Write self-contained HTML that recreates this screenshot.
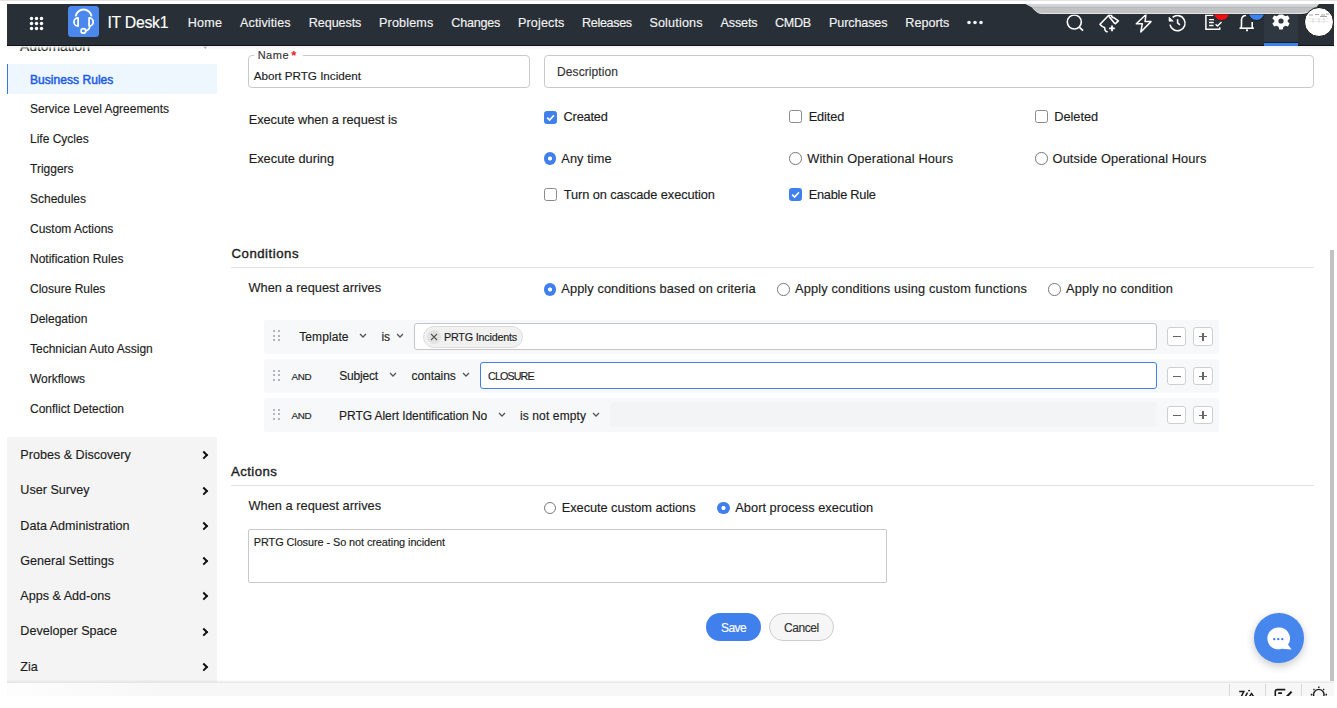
<!DOCTYPE html>
<html><head><meta charset="utf-8">
<style>
html,body{margin:0;padding:0;width:1337px;height:708px;overflow:hidden;background:#fff;}
body{position:relative;font-family:"Liberation Sans",sans-serif;}
.t{position:absolute;white-space:pre;line-height:1;-webkit-text-stroke:0.15px currentColor;}
.a{position:absolute;box-sizing:border-box;}
.cb{position:absolute;box-sizing:border-box;width:13px;height:13px;border:1px solid #8a8a8a;border-radius:2.5px;background:#fff;}
.cb.on{background:#3f80ec;border-color:#3f80ec;}
.rd{position:absolute;box-sizing:border-box;width:12.5px;height:12.5px;border:1px solid #7a7a7a;border-radius:50%;background:#fff;}
.rd.on{border:none;background:radial-gradient(circle at 50% 50%,#fff 0,#fff 1.7px,#3f80ec 2.4px);}
.row{position:absolute;left:263.5px;width:955.5px;height:34px;background:#f6f8fa;border-radius:3px;}
.dots{position:absolute;left:272.5px;width:8px;height:11px;}
.dots i{position:absolute;width:2px;height:2px;border-radius:1px;background:#9aa1a8;}
.chev{position:absolute;width:5px;height:5px;border-right:1.3px solid #555;border-bottom:1.3px solid #555;transform:rotate(45deg);}
.sbtn{position:absolute;box-sizing:border-box;width:19.5px;height:18.5px;border:1px solid #cfcfcf;border-radius:3px;background:#fff;}
.sbtn .h{position:absolute;left:5px;top:8px;width:8px;height:1.3px;background:#666;}
.sbtn .v{position:absolute;left:8.4px;top:4.7px;width:1.3px;height:8px;background:#666;}
.rchev{position:absolute;width:4.1px;height:4.1px;border-right:2.1px solid #111;border-bottom:2.1px solid #111;transform:rotate(-45deg);}
</style></head>
<body>
<!-- top strip -->
<div class="a" style="left:0;top:0;width:1337px;height:1px;background:#e4e4e4"></div>

<!-- sidebar highlight -->
<div class="a" style="left:7px;top:64px;width:210px;height:29.7px;background:#eff7fe"></div>
<div class="a" style="left:7px;top:64px;width:1.2px;height:29.7px;background:#3a78e6"></div>
<div class="chev" style="left:202.3px;top:40.3px;width:5.5px;height:5.5px;border-right:1.6px solid #222;border-bottom:1.6px solid #222"></div>

<!-- lower sidebar -->
<div class="a" style="left:7px;top:437px;width:210.3px;height:246px;background:#f4f4f4"></div>
<div class="a" style="left:217px;top:679.5px;width:1117px;height:3.5px;background:linear-gradient(rgba(235,235,235,0),#e4e4e4)"></div>
<div class="a" style="left:7px;top:680px;width:210px;height:3px;background:linear-gradient(#f0f0f0,#e4e4e4)"></div>
<div class="a" style="left:7px;top:683px;width:1327px;height:12.6px;background:linear-gradient(90deg,#fdfdfd,#f7f7f7 12%,#f7f7f7)"></div>
<div class="a" style="left:1229px;top:684px;width:1px;height:11.5px;background:#d8d8d8"></div>
<div class="a" style="left:1265px;top:684px;width:1px;height:11.5px;background:#d8d8d8"></div>
<div class="a" style="left:1301px;top:684px;width:1px;height:11.5px;background:#d8d8d8"></div>
<div class="rchev" style="left:200.6px;top:452.2px"></div>
<div class="rchev" style="left:200.6px;top:487.5px"></div>
<div class="rchev" style="left:200.6px;top:522.8px"></div>
<div class="rchev" style="left:200.6px;top:558.1px"></div>
<div class="rchev" style="left:200.6px;top:593.3px"></div>
<div class="rchev" style="left:200.6px;top:628.6px"></div>
<div class="rchev" style="left:200.6px;top:663.9px"></div>
<!-- bottom bar partial icons -->
<div class="a" style="left:1200px;top:686px;width:134px;height:9.6px;overflow:hidden">
<svg class="a" style="left:36px;top:0" width="22" height="12" viewBox="0 0 22 12"><path d="M3.2 5.5 H7.8 L5.3 10.5 M11.5 6.6 L9.4 10.5 M13.5 10.5 L15.5 7.6 L17.5 10.5" stroke="#1a1a1a" stroke-width="1.5" fill="none"/><circle cx="13.1" cy="4.6" r="0.95" fill="#1a1a1a"/></svg>
<svg class="a" style="left:73px;top:2px" width="22" height="10" viewBox="0 0 22 10"><path d="M2.3 9 V3.6 Q2.3 1.6 4.3 1.6 H12.3 M5.2 5.1 H9" stroke="#1a1a1a" stroke-width="1.6" fill="none"/><path d="M13 9.5 L18.6 3.6" stroke="#1a1a1a" stroke-width="2.1"/></svg>
<svg class="a" style="left:109px;top:0" width="20" height="12" viewBox="0 0 20 12"><path d="M5.2 11 A5.2 5.2 0 1 1 14.4 11 M9.8 0.6 V1.9 M4.5 3.1 L5.4 4 M15.1 3.1 L14.2 4" stroke="#1a1a1a" stroke-width="1.4" fill="none"/><path d="M1.8 8.6 H3.3 M16.5 8.6 H18" stroke="#1a1a1a" stroke-width="1.6"/></svg>
</div>
<!-- form top -->
<div class="a" style="left:248.4px;top:55.2px;width:281.6px;height:33.2px;border:1px solid #c9c9c9;border-radius:4px"></div>
<div class="a" style="left:254px;top:52px;width:49px;height:6px;background:#fff"></div>
<div class="t" style="left:291.3px;top:48.5px;font-size:13px;color:#e8231e;font-weight:700;-webkit-text-stroke:0">*</div>
<div class="a" style="left:543.8px;top:55.2px;width:770px;height:33.2px;border:1px solid #c9c9c9;border-radius:4px"></div>

<div class="cb on" style="left:543.8px;top:110.6px"><svg width="11" height="11" viewBox="0 0 11 11" style="position:absolute;left:0;top:0"><path d="M2.2 5.6 L4.6 8 L9 3.2" stroke="#fff" stroke-width="1.7" fill="none"/></svg></div>
<div class="cb" style="left:789px;top:110.3px"></div>
<div class="cb" style="left:1034.8px;top:110.3px"></div>
<div class="rd on" style="left:543.8px;top:152px"></div>
<div class="rd" style="left:789.2px;top:152.2px"></div>
<div class="rd" style="left:1035px;top:152.2px"></div>
<div class="cb" style="left:543.8px;top:188.3px"></div>
<div class="cb on" style="left:789px;top:188.1px"><svg width="11" height="11" viewBox="0 0 11 11" style="position:absolute;left:0;top:0"><path d="M2.2 5.6 L4.6 8 L9 3.2" stroke="#fff" stroke-width="1.7" fill="none"/></svg></div>

<!-- conditions -->
<div class="a" style="left:230.7px;top:267.3px;width:1083.5px;height:1.2px;background:#e3e3e3"></div>
<div class="rd on" style="left:543.8px;top:283px"></div>
<div class="rd" style="left:777.2px;top:283px"></div>
<div class="rd" style="left:1048.2px;top:283px"></div>

<div class="row" style="top:319.7px"></div>
<div class="row" style="top:359.4px"></div>
<div class="row" style="top:398.4px"></div>
<div class="dots" style="top:330px"><i style="left:0;top:0"></i><i style="left:5.6px;top:0"></i><i style="left:0;top:4.7px"></i><i style="left:5.6px;top:4.7px"></i><i style="left:0;top:9.4px"></i><i style="left:5.6px;top:9.4px"></i></div>
<div class="dots" style="top:369.7px"><i style="left:0;top:0"></i><i style="left:5.6px;top:0"></i><i style="left:0;top:4.7px"></i><i style="left:5.6px;top:4.7px"></i><i style="left:0;top:9.4px"></i><i style="left:5.6px;top:9.4px"></i></div>
<div class="dots" style="top:408.7px"><i style="left:0;top:0"></i><i style="left:5.6px;top:0"></i><i style="left:0;top:4.7px"></i><i style="left:5.6px;top:4.7px"></i><i style="left:0;top:9.4px"></i><i style="left:5.6px;top:9.4px"></i></div>

<svg class="a" style="left:358.8px;top:333.1px" width="8" height="5" viewBox="0 0 8 5"><path d="M1 1 L4 4 L7 1" stroke="#555" stroke-width="1.3" fill="none"/></svg>
<svg class="a" style="left:395.8px;top:333.1px" width="8" height="5" viewBox="0 0 8 5"><path d="M1 1 L4 4 L7 1" stroke="#555" stroke-width="1.3" fill="none"/></svg>
<div class="a" style="left:413.5px;top:323.2px;width:743.1px;height:26.8px;background:#fff;border:1px solid #c5c5c5;border-radius:3px"></div>
<div class="a" style="left:423.3px;top:326px;width:99.3px;height:21.7px;background:#f1f1f1;border:1px solid #dcdcdc;border-radius:11px"></div>
<div class="a" style="left:427px;top:329.5px;width:14px;height:14px;background:#e2e2e2;border-radius:7px"></div>
<svg class="a" style="left:430px;top:332.5px" width="8" height="8" viewBox="0 0 8 8"><path d="M1 1 L7 7 M7 1 L1 7" stroke="#555" stroke-width="1.1"/></svg>

<svg class="a" style="left:388.6px;top:372.3px" width="8" height="5" viewBox="0 0 8 5"><path d="M1 1 L4 4 L7 1" stroke="#555" stroke-width="1.3" fill="none"/></svg>
<svg class="a" style="left:461.6px;top:372.3px" width="8" height="5" viewBox="0 0 8 5"><path d="M1 1 L4 4 L7 1" stroke="#555" stroke-width="1.3" fill="none"/></svg>
<div class="a" style="left:480.3px;top:362.2px;width:676.3px;height:26.4px;background:#fff;border:1.3px solid #3f80ec;border-radius:3px"></div>

<svg class="a" style="left:497.7px;top:411.5px" width="8" height="5" viewBox="0 0 8 5"><path d="M1 1 L4 4 L7 1" stroke="#555" stroke-width="1.3" fill="none"/></svg>
<svg class="a" style="left:592.3px;top:411.5px" width="8" height="5" viewBox="0 0 8 5"><path d="M1 1 L4 4 L7 1" stroke="#555" stroke-width="1.3" fill="none"/></svg>
<div class="a" style="left:610px;top:401.8px;width:546.6px;height:25.7px;background:#f2f4f6;border-radius:3px"></div>

<div class="sbtn" style="left:1166.5px;top:327px"><div class="h"></div></div>
<div class="sbtn" style="left:1193px;top:327px"><div class="h"></div><div class="v"></div></div>
<div class="sbtn" style="left:1166.5px;top:366.5px"><div class="h"></div></div>
<div class="sbtn" style="left:1193px;top:366.5px"><div class="h"></div><div class="v"></div></div>
<div class="sbtn" style="left:1166.5px;top:405.5px"><div class="h"></div></div>
<div class="sbtn" style="left:1193px;top:405.5px"><div class="h"></div><div class="v"></div></div>

<!-- actions -->
<div class="a" style="left:230.7px;top:485.2px;width:1083.5px;height:1.2px;background:#e3e3e3"></div>
<div class="rd" style="left:543.8px;top:501.8px"></div>
<div class="rd on" style="left:717.3px;top:501.8px"></div>
<div class="a" style="left:248.4px;top:529.3px;width:639.1px;height:54px;border:1px solid #c9c9c9;border-radius:2px"></div>
<div class="a" style="left:706.3px;top:613.1px;width:54.5px;height:27.7px;background:#3f80ec;border-radius:14px"></div>
<div class="a" style="left:769px;top:613.1px;width:64.6px;height:27.7px;background:#f6f6f6;border:1px solid #cdcdcd;border-radius:14px"></div>

<!-- scrollbar -->
<div class="a" style="left:1330px;top:250px;width:4px;height:430.5px;background:#c2c2c2"></div>

<!-- chat fab -->
<div class="a" style="left:1254px;top:613px;width:49.5px;height:49.5px;background:#4787ed;border-radius:50%;box-shadow:0 3px 8px rgba(0,0,0,0.22)"></div>
<svg class="a" style="left:1266px;top:626px" width="27" height="25" viewBox="0 0 27 25"><path d="M12.3 1.5 A10.9 10.9 0 1 0 15.5 22.8 L25.6 23.6 L22 18.6 A10.9 10.9 0 0 0 12.3 1.5 Z" fill="#fff"/><circle cx="8.3" cy="13.2" r="1.15" fill="#3a78e6"/><circle cx="12.3" cy="13.2" r="1.15" fill="#3a78e6"/><circle cx="16.3" cy="13.2" r="1.15" fill="#3a78e6"/></svg>

<div id="hdr" style="position:absolute;left:0;top:0;width:1337px;height:46px;z-index:10">
<!-- header -->
<div class="a" style="left:7px;top:4px;width:1327px;height:41.5px;background:#282f37"></div>
<div class="a" style="left:7px;top:44.6px;width:1327px;height:1.1px;background:#0f1317"></div>
<div class="a" style="left:7px;top:45.7px;width:1327px;height:4px;background:linear-gradient(#f3f3f3,rgba(255,255,255,0))"></div>
<div class="a" style="left:1264px;top:4px;width:34px;height:41.5px;background:#2f3741"></div>
<div class="a" style="left:1264px;top:41.8px;width:34px;height:1px;background:#1a1f24"></div>
<div class="a" style="left:1264px;top:42.8px;width:34px;height:2.9px;background:#3a82f0"></div>
<!-- grid icon -->
<svg class="a" style="left:29px;top:16px" width="15" height="15" viewBox="0 0 15 15" fill="#fff">
<circle cx="2.5" cy="2.5" r="1.72"/><circle cx="7.5" cy="2.5" r="1.72"/><circle cx="12.5" cy="2.5" r="1.72"/>
<circle cx="2.5" cy="7.5" r="1.72"/><circle cx="7.5" cy="7.5" r="1.72"/><circle cx="12.5" cy="7.5" r="1.72"/>
<circle cx="2.5" cy="12.5" r="1.72"/><circle cx="7.5" cy="12.5" r="1.72"/><circle cx="12.5" cy="12.5" r="1.72"/></svg>
<!-- logo -->
<div class="a" style="left:68.3px;top:6.3px;width:31px;height:30.7px;background:#4a88ee;border-radius:3.5px"></div>
<svg class="a" style="left:68.3px;top:6.3px" width="31" height="31" viewBox="0 0 31 31">
<path d="M7.6 10.4 A8.1 8.1 0 0 1 23.6 10.4" stroke="#fff" stroke-width="1.9" fill="none"/>
<path d="M10.1 11.9 A4.1 4.1 0 0 0 10.1 20.1 Z" stroke="#fff" stroke-width="1.8" fill="none" stroke-linejoin="round"/>
<path d="M21.1 11.9 A4.1 4.1 0 0 1 21.1 20.1 Z" stroke="#fff" stroke-width="1.8" fill="none" stroke-linejoin="round"/>
<path d="M21.9 20.2 Q21.5 24 17.7 24.9" stroke="#fff" stroke-width="1.6" fill="none"/>
<circle cx="15.4" cy="24.9" r="2.3" stroke="#fff" stroke-width="1.7" fill="#4a88ee"/>
</svg>
<!-- more dots -->
<svg class="a" style="left:967px;top:20px" width="16" height="5" viewBox="0 0 16 5" fill="#f2f2f2"><circle cx="2" cy="2.5" r="1.8"/><circle cx="8" cy="2.5" r="1.8"/><circle cx="14" cy="2.5" r="1.8"/></svg>

<!-- right icons -->
<svg class="a" style="left:1064px;top:12px" width="22" height="22" viewBox="0 0 22 22"><circle cx="10.3" cy="10" r="7" stroke="#fff" stroke-width="1.6" fill="none"/><path d="M15.3 15.2 L19 18.7" stroke="#fff" stroke-width="1.8"/></svg>
<svg class="a" style="left:1096px;top:10px" width="28" height="26" viewBox="0 0 28 26" fill="none" stroke="#fff" stroke-width="1.6" stroke-linejoin="round">
<path d="M6.8 17 L4 14.3 L13 5 L15.6 5.4 Q15.6 7.6 17.8 7.6 L22.4 10.8 L18.8 14.2"/>
<path d="M12.8 6.3 L18.9 13.7"/>
<path d="M6.8 17 Q8.8 16.9 8.9 18.9 Q8.7 20.4 9.9 21.2 L11.6 22"/>
<path d="M13.2 18.4 H18.8 M16 15.6 V21.2" stroke-width="1.8"/>
</svg>
<svg class="a" style="left:1134px;top:12px" width="20" height="22" viewBox="0 0 20 22"><path d="M12 2.5 L2.3 11.8 H8.3 L6.8 20 L17 9.6 H11 Z" stroke="#fff" stroke-width="1.5" fill="none" stroke-linejoin="round"/></svg>
<svg class="a" style="left:1163px;top:10px" width="30" height="26" viewBox="0 0 30 26"><path d="M7.0 14.6 A7.6 7.6 0 1 0 9.6 7.3" stroke="#fff" stroke-width="1.6" fill="none"/><path d="M6.0 7.0 L6.0 11.2 L10.3 11.2 Z" fill="#fff" stroke="#fff" stroke-width="0.6" stroke-linejoin="round"/><path d="M14.6 9.3 V12.9 L16.9 14.8" stroke="#fff" stroke-width="1.6" fill="none"/></svg>
<svg class="a" style="left:1204px;top:14px" width="20" height="18" viewBox="0 0 20 18"><path d="M9.5 1.3 H1.9 V15.3 H15.7 V13.2" stroke="#fff" stroke-width="1.5" fill="none"/><path d="M5.1 5.6 H10 M5.1 8.5 H9.7 M5.1 11.5 H9.5" stroke="#fff" stroke-width="1.4"/><path d="M11.6 10.3 L13.5 12 L17.5 8" stroke="#fff" stroke-width="1.4" fill="none"/></svg>
<div class="a" style="left:1200px;top:4px;width:70px;height:30px;overflow:hidden"><div class="a" style="left:12.7px;top:-0.6px;width:17.6px;height:17.6px;background:#f40d0d;border-radius:50%;border:0.9px solid #1b2f35"></div></div>
<svg class="a" style="left:1236px;top:12px" width="20" height="21" viewBox="0 0 20 21"><path d="M3.5 16.2 H17.9" stroke="#fff" stroke-width="1.6"/><path d="M5.2 16 Q5.5 14 5.5 12 V8 Q5.8 3.5 10 3.5 M16.2 16 V10" stroke="#fff" stroke-width="1.6" fill="none"/><path d="M10.1 18.2 H11.9" stroke="#fff" stroke-width="2"/></svg>
<div class="a" style="left:1240px;top:4px;width:40px;height:30px;overflow:hidden"><div class="a" style="left:7.5px;top:-0.2px;width:17.4px;height:17.4px;background:#3f84ee;border-radius:50%;border:0.9px solid #1a1c1e"></div></div>
<svg class="a" style="left:1271px;top:11px" width="20" height="20" viewBox="0 0 20 20"><path fill="#fff" fill-rule="evenodd" d="M8.3 1.5 H11.7 L12.3 4 L14.4 5.2 L16.9 4.4 L18.6 7.4 L16.7 9.2 V10.8 L18.6 12.6 L16.9 15.6 L14.4 14.8 L12.3 16 L11.7 18.5 H8.3 L7.7 16 L5.6 14.8 L3.1 15.6 L1.4 12.6 L3.3 10.8 V9.2 L1.4 7.4 L3.1 4.4 L5.6 5.2 L7.7 4 Z M10 7.4 A2.6 2.6 0 1 0 10 12.6 A2.6 2.6 0 1 0 10 7.4 Z"/></svg>
<!-- overlay notch -->
<svg class="a" style="left:1020px;top:4px" width="310" height="12" viewBox="0 0 310 12">
<path d="M5.7 0 L12 3.4 Q14.5 5.8 16.5 7.6 Q18.8 10.3 21.8 10.6 L281 10.6 Q288 10.6 292 6.5 Q295.5 2 299 0 Z" fill="#0c0f12"/>
<path d="M5.7 0 L12 3.4 Q14.5 5.8 16.5 7.6 Q18.8 9.6 21.5 9.8 L281 9.8 Q288 9.8 292 6 Q295.5 2 299 0 Z" fill="#c1c2c3"/>
<path d="M5.7 0 L12 3.2 L296.4 3.2 Q297.7 1.4 299 0 Z" fill="#d3d4d5"/>
<path d="M12 3.3 H296.3" stroke="#a8a8a8" stroke-width="0.6"/>
<path d="M12.5 3.9 Q14.5 5.8 16.5 7.6 Q18.8 9.6 21.5 9.6 L281 9.6 Q288 9.6 292 5.8" stroke="#f4f4f4" stroke-width="0.9" fill="none"/>
</svg>
<div class="a" style="left:1303.5px;top:7px;width:30.3px;height:30.3px;background:#fff;border-radius:50%;border:1.2px solid #111"></div>
<svg class="a" style="left:1307px;top:12px" width="24" height="12" viewBox="0 0 24 12"><path d="M2 3 H6 M8 2.5 H12 M14 3 H18 M19 2 H22 M13 4.5 H20" stroke="#9a9a9a" stroke-width="0.9"/><path d="M2 7 H22 M2 9.5 H22" stroke="#ececec" stroke-width="1"/><path d="M6 6 V11 M12 6 V11 M17 6 V11" stroke="#c8c8c8" stroke-width="0.6"/></svg>



</div>
<div class="t" style="left:107.5px;top:15.33px;font-size:15.80px;font-weight:400;color:#ffffff;letter-spacing:-0.278px;z-index:20;">IT Desk1</div>
<div class="t" style="left:187.8px;top:17.44px;font-size:12.60px;font-weight:400;color:#f2f2f2;letter-spacing:0.227px;z-index:20;">Home</div>
<div class="t" style="left:240.0px;top:17.44px;font-size:12.60px;font-weight:400;color:#f2f2f2;letter-spacing:0.101px;z-index:20;">Activities</div>
<div class="t" style="left:308.8px;top:17.44px;font-size:12.60px;font-weight:400;color:#f2f2f2;letter-spacing:-0.090px;z-index:20;">Requests</div>
<div class="t" style="left:379.0px;top:17.44px;font-size:12.60px;font-weight:400;color:#f2f2f2;letter-spacing:0.150px;z-index:20;">Problems</div>
<div class="t" style="left:451.3px;top:17.44px;font-size:12.60px;font-weight:400;color:#f2f2f2;letter-spacing:-0.217px;z-index:20;">Changes</div>
<div class="t" style="left:518.0px;top:17.44px;font-size:12.60px;font-weight:400;color:#f2f2f2;letter-spacing:0.125px;z-index:20;">Projects</div>
<div class="t" style="left:582.0px;top:17.44px;font-size:12.60px;font-weight:400;color:#f2f2f2;letter-spacing:-0.339px;z-index:20;">Releases</div>
<div class="t" style="left:649.4px;top:17.44px;font-size:12.60px;font-weight:400;color:#f2f2f2;letter-spacing:0.165px;z-index:20;">Solutions</div>
<div class="t" style="left:720.6px;top:17.44px;font-size:12.60px;font-weight:400;color:#f2f2f2;letter-spacing:-0.166px;z-index:20;">Assets</div>
<div class="t" style="left:775.0px;top:17.44px;font-size:12.60px;font-weight:400;color:#f2f2f2;letter-spacing:-0.348px;z-index:20;">CMDB</div>
<div class="t" style="left:829.0px;top:17.44px;font-size:12.60px;font-weight:400;color:#f2f2f2;letter-spacing:-0.124px;z-index:20;">Purchases</div>
<div class="t" style="left:905.3px;top:17.44px;font-size:12.60px;font-weight:400;color:#f2f2f2;letter-spacing:-0.001px;z-index:20;">Reports</div>
<div class="t" style="left:20.0px;top:39.45px;font-size:14.00px;font-weight:400;color:#1d1d1d;letter-spacing:-0.083px;">Automation</div>
<div class="t" style="left:30.0px;top:73.54px;font-size:12.00px;font-weight:400;color:#1c5de6;letter-spacing:0.049px;-webkit-text-stroke:0.5px currentColor;">Business Rules</div>
<div class="t" style="left:30.0px;top:103.14px;font-size:12.00px;font-weight:400;color:#1d1d1d;letter-spacing:-0.017px;">Service Level Agreements</div>
<div class="t" style="left:30.0px;top:133.14px;font-size:12.00px;font-weight:400;color:#1d1d1d;">Life Cycles</div>
<div class="t" style="left:30.0px;top:163.14px;font-size:12.00px;font-weight:400;color:#1d1d1d;">Triggers</div>
<div class="t" style="left:30.0px;top:193.14px;font-size:12.00px;font-weight:400;color:#1d1d1d;">Schedules</div>
<div class="t" style="left:30.0px;top:223.14px;font-size:12.00px;font-weight:400;color:#1d1d1d;">Custom Actions</div>
<div class="t" style="left:30.0px;top:253.14px;font-size:12.00px;font-weight:400;color:#1d1d1d;">Notification Rules</div>
<div class="t" style="left:30.0px;top:283.14px;font-size:12.00px;font-weight:400;color:#1d1d1d;">Closure Rules</div>
<div class="t" style="left:30.0px;top:313.14px;font-size:12.00px;font-weight:400;color:#1d1d1d;">Delegation</div>
<div class="t" style="left:30.0px;top:343.14px;font-size:12.00px;font-weight:400;color:#1d1d1d;">Technician Auto Assign</div>
<div class="t" style="left:30.0px;top:373.14px;font-size:12.00px;font-weight:400;color:#1d1d1d;">Workflows</div>
<div class="t" style="left:30.0px;top:403.14px;font-size:12.00px;font-weight:400;color:#1d1d1d;">Conflict Detection</div>
<div class="t" style="left:20.3px;top:449.24px;font-size:12.60px;font-weight:400;color:#1d1d1d;letter-spacing:-0.005px;">Probes &amp; Discovery</div>
<div class="t" style="left:20.3px;top:484.49px;font-size:12.60px;font-weight:400;color:#1d1d1d;">User Survey</div>
<div class="t" style="left:20.3px;top:519.74px;font-size:12.60px;font-weight:400;color:#1d1d1d;">Data Administration</div>
<div class="t" style="left:20.3px;top:554.99px;font-size:12.60px;font-weight:400;color:#1d1d1d;">General Settings</div>
<div class="t" style="left:20.3px;top:590.24px;font-size:12.60px;font-weight:400;color:#1d1d1d;">Apps &amp; Add-ons</div>
<div class="t" style="left:20.3px;top:625.49px;font-size:12.60px;font-weight:400;color:#1d1d1d;">Developer Space</div>
<div class="t" style="left:20.3px;top:660.74px;font-size:12.60px;font-weight:400;color:#1d1d1d;">Zia</div>
<div class="t" style="left:257.7px;top:50.49px;font-size:11.00px;font-weight:400;color:#333;letter-spacing:0.489px;">Name</div>
<div class="t" style="left:253.7px;top:69.60px;font-size:11.70px;font-weight:400;color:#1d1d1d;letter-spacing:-0.022px;">Abort PRTG Incident</div>
<div class="t" style="left:557.1px;top:66.34px;font-size:12.00px;font-weight:400;color:#333;letter-spacing:0.079px;">Description</div>
<div class="t" style="left:248.7px;top:114.07px;font-size:12.80px;font-weight:400;color:#1d1d1d;letter-spacing:-0.064px;">Execute when a request is</div>
<div class="t" style="left:248.7px;top:152.87px;font-size:12.80px;font-weight:400;color:#1d1d1d;">Execute during</div>
<div class="t" style="left:563.6px;top:110.87px;font-size:12.80px;font-weight:400;color:#1d1d1d;letter-spacing:-0.219px;">Created</div>
<div class="t" style="left:808.7px;top:110.87px;font-size:12.80px;font-weight:400;color:#1d1d1d;letter-spacing:-0.133px;">Edited</div>
<div class="t" style="left:1054.3px;top:110.87px;font-size:12.80px;font-weight:400;color:#1d1d1d;letter-spacing:-0.058px;">Deleted</div>
<div class="t" style="left:561.3px;top:152.87px;font-size:12.80px;font-weight:400;color:#1d1d1d;letter-spacing:0.063px;">Any time</div>
<div class="t" style="left:807.2px;top:152.87px;font-size:12.80px;font-weight:400;color:#1d1d1d;letter-spacing:0.126px;">Within Operational Hours</div>
<div class="t" style="left:1052.6px;top:152.87px;font-size:12.80px;font-weight:400;color:#1d1d1d;letter-spacing:0.091px;">Outside Operational Hours</div>
<div class="t" style="left:563.8px;top:188.87px;font-size:12.80px;font-weight:400;color:#1d1d1d;letter-spacing:-0.087px;">Turn on cascade execution</div>
<div class="t" style="left:808.7px;top:188.57px;font-size:12.80px;font-weight:400;color:#1d1d1d;letter-spacing:-0.249px;">Enable Rule</div>
<div class="t" style="left:231.5px;top:247.43px;font-size:13.20px;font-weight:400;color:#1d1d1d;letter-spacing:0.519px;-webkit-text-stroke:0.38px currentColor;">Conditions</div>
<div class="t" style="left:248.5px;top:282.37px;font-size:12.80px;font-weight:400;color:#1d1d1d;letter-spacing:0.014px;">When a request arrives</div>
<div class="t" style="left:561.3px;top:282.87px;font-size:12.80px;font-weight:400;color:#1d1d1d;letter-spacing:0.089px;">Apply conditions based on criteria</div>
<div class="t" style="left:795.1px;top:282.87px;font-size:12.80px;font-weight:400;color:#1d1d1d;letter-spacing:0.128px;">Apply conditions using custom functions</div>
<div class="t" style="left:1066.0px;top:282.87px;font-size:12.80px;font-weight:400;color:#1d1d1d;letter-spacing:0.134px;">Apply no condition</div>
<div class="t" style="left:299.3px;top:331.24px;font-size:12.00px;font-weight:400;color:#1d1d1d;letter-spacing:0.075px;">Template</div>
<div class="t" style="left:381.6px;top:331.24px;font-size:12.00px;font-weight:400;color:#1d1d1d;letter-spacing:-0.336px;">is</div>
<div class="t" style="left:444.0px;top:332.06px;font-size:10.80px;font-weight:400;color:#1d1d1d;letter-spacing:-0.215px;">PRTG Incidents</div>
<div class="t" style="left:291.4px;top:371.73px;font-size:9.88px;font-weight:400;color:#1d1d1d;letter-spacing:-0.286px;">AND</div>
<div class="t" style="left:339.2px;top:370.14px;font-size:12.00px;font-weight:400;color:#1d1d1d;letter-spacing:-0.176px;">Subject</div>
<div class="t" style="left:411.5px;top:370.14px;font-size:12.00px;font-weight:400;color:#1d1d1d;letter-spacing:-0.050px;">contains</div>
<div class="t" style="left:488.0px;top:370.90px;font-size:10.76px;font-weight:400;color:#1d1d1d;letter-spacing:-0.883px;">CLOSURE</div>
<div class="t" style="left:291.4px;top:410.93px;font-size:9.88px;font-weight:400;color:#1d1d1d;letter-spacing:-0.286px;">AND</div>
<div class="t" style="left:339.1px;top:409.74px;font-size:12.00px;font-weight:400;color:#1d1d1d;letter-spacing:-0.066px;">PRTG Alert Identification No</div>
<div class="t" style="left:519.9px;top:409.74px;font-size:12.00px;font-weight:400;color:#1d1d1d;letter-spacing:0.133px;">is not empty</div>
<div class="t" style="left:231.0px;top:465.43px;font-size:13.20px;font-weight:400;color:#1d1d1d;letter-spacing:0.421px;-webkit-text-stroke:0.38px currentColor;">Actions</div>
<div class="t" style="left:248.5px;top:500.37px;font-size:12.80px;font-weight:400;color:#1d1d1d;letter-spacing:0.014px;">When a request arrives</div>
<div class="t" style="left:561.8px;top:501.67px;font-size:12.80px;font-weight:400;color:#1d1d1d;letter-spacing:-0.066px;">Execute custom actions</div>
<div class="t" style="left:735.3px;top:501.67px;font-size:12.80px;font-weight:400;color:#1d1d1d;letter-spacing:0.026px;">Abort process execution</div>
<div class="t" style="left:253.8px;top:537.27px;font-size:10.90px;font-weight:400;color:#1d1d1d;letter-spacing:-0.075px;">PRTG Closure - So not creating incident</div>
<div class="t" style="left:721.0px;top:621.74px;font-size:12.00px;font-weight:400;color:#ffffff;letter-spacing:-0.590px;">Save</div>
<div class="t" style="left:784.0px;top:621.74px;font-size:12.00px;font-weight:400;color:#333;letter-spacing:-0.443px;">Cancel</div>
</body></html>
